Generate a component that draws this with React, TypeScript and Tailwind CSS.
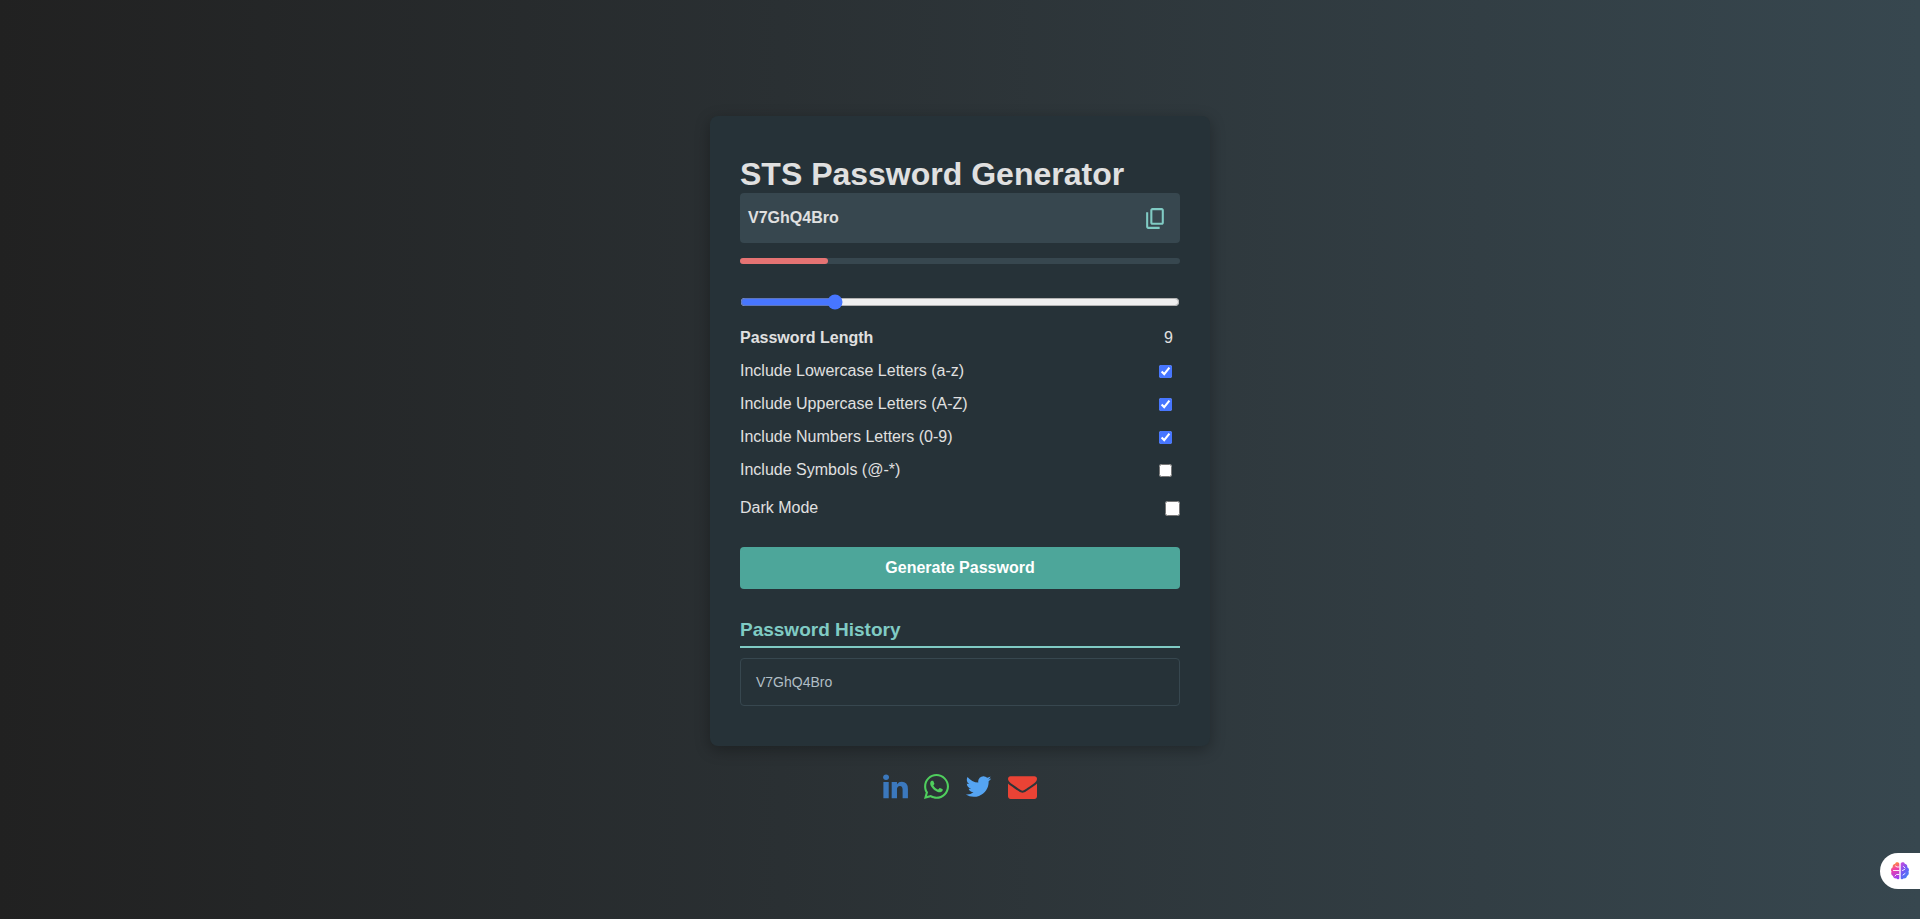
import { useState } from "react";
import { FaWhatsapp } from "react-icons/fa";

type OptionKey = "lower" | "upper" | "numbers" | "symbols";

const OPTIONS: { key: OptionKey; label: string; chars: string }[] = [
  { key: "lower", label: "Include Lowercase Letters (a-z)", chars: "abcdefghijklmnopqrstuvwxyz" },
  { key: "upper", label: "Include Uppercase Letters (A-Z)", chars: "ABCDEFGHIJKLMNOPQRSTUVWXYZ" },
  { key: "numbers", label: "Include Numbers Letters (0-9)", chars: "0123456789" },
  { key: "symbols", label: "Include Symbols (@-*)", chars: "!@#$%^&*()-_=+" },
];

function CopyIcon() {
  return (
    <svg viewBox="0 -960 960 960" className="size-[25px]" fill="currentColor" aria-hidden="true">
      <path d="M360-240q-33 0-56.5-23.5T280-320v-480q0-33 23.5-56.5T360-880h360q33 0 56.5 23.5T800-800v480q0 33-23.5 56.5T720-240H360Zm0-80h360v-480H360v480ZM200-80q-33 0-56.5-23.5T120-160v-560h80v560h440v80H200Z" />
    </svg>
  );
}

function LinkedInIcon() {
  return (
    <svg viewBox="128 0 1536 1792" className="h-[29px] w-[25px] text-[#3b78bd]" fill="currentColor" aria-hidden="true">
      <path d="M477 625v991h-330v-991h330zm21-306q1 73-50.5 122t-135.5 49h-2q-82 0-132-49t-50-122q0-74 51.5-122.5t134.500-48.500 133 48.500 51 122.500zm1166 729v568h-329v-530q0-105-40.500-164.500t-126.500-59.500q-63 0-105.500 34.500t-63.500 85.500q-11 30-11 81v553h-329q2-399 2-647t-1-296l-1-48h329v144h-2q20-32 41-56t56.500-52 87-43.500 114.500-15.500q171 0 275 113.500t104 332.500z" />
    </svg>
  );
}

function TwitterIcon() {
  return (
    <svg viewBox="64 0 1664 1792" className="h-[29px] w-[27px] text-[#55a4f2]" fill="currentColor" aria-hidden="true">
      <path d="M1684 408q-67 98-162 167 1 14 1 42 0 130-38 259.500t-115.500 248.500-184.500 210.500-258 146-323 54.500q-271 0-496-145 35 4 78 4 225 0 401-138-105-2-188-64.500t-114-159.500q33 5 61 5 43 0 85-11-112-23-185.500-111.500t-73.500-205.500v-4q68 38 146 41-66-44-105-115t-39-154q0-88 44-163 121 149 294.500 238.500t371.500 99.500q-8-38-8-74 0-134 94.500-228.500t228.500-94.500q140 0 236 102 109-21 205-78-37 115-142 178 93-10 186-50z" />
    </svg>
  );
}

function EnvelopeIcon() {
  return (
    <svg viewBox="0 0 1792 1792" className="size-[29px] text-[#ea4335]" fill="currentColor" aria-hidden="true">
      <path d="M1792 710v794q0 66-47 113t-113 47h-1472q-66 0-113-47t-47-113v-794q44 49 101 87 362 246 497 345 57 42 92.500 65.500t94.500 48 110 24.500h2q51 0 110-24.500t94.500-48 92.500-65.500q170-123 498-345 57-39 100-87zm0-294q0 79-49 151t-122 123q-376 261-468 325-10 7-42.500 31t-54 38.800-52 32.500-57.500 27-50 9h-2q-23 0-50-9t-57.500-27-52-32.500-54-38.800-42.500-31q-91-64-262-182.500t-205-142.500q-62-42-117-115.500t-55-136.500q0-78 41.500-130t118.500-52h1472q65 0 112.500 47t47.500 113z" />
    </svg>
  );
}

function BrainIcon() {
  return (
    <svg viewBox="0 0 20 20" className="size-5" aria-hidden="true">
      <defs>
        <linearGradient id="brain-left" x1="0.4" y1="0" x2="0.6" y2="1">
          <stop offset="0.05" stopColor="#ff8a3d" />
          <stop offset="0.4" stopColor="#f03fa8" />
          <stop offset="1" stopColor="#9a3ff5" />
        </linearGradient>
        <linearGradient id="brain-right" x1="0.2" y1="0" x2="0.8" y2="1">
          <stop offset="0" stopColor="#c24be0" />
          <stop offset="0.5" stopColor="#6a5cf5" />
          <stop offset="1" stopColor="#3f8cf5" />
        </linearGradient>
      </defs>
      <path
        fill="url(#brain-left)"
        d="M9.3 2.500C8.300.8 5.800.9 5.200 2.700 3.300 2.900 2.300 4.600 2.800 6.200 1 7 .500 9.200 1.500 10.500.700 12.400 1.400 14.300 3 14.900 3.200 16.800 4.800 17.700 6.200 17.300 7.200 18.800 9 18.600 9.300 17.200Z"
      />
      <path
        fill="url(#brain-right)"
        d="M10.700 2.500C11.700.8 14.200.9 14.800 2.700 16.700 2.900 17.700 4.600 17.200 6.200 19 7 19.500 9.200 18.500 10.500 19.300 12.400 18.600 14.300 17 14.900 16.800 16.800 15.200 17.700 13.800 17.300 12.800 18.800 11 18.600 10.700 17.200Z"
      />
      <path
        fill="none"
        stroke="#fff"
        strokeWidth="0.9"
        strokeLinecap="round"
        d="M9 6H7L5.500 5M9 9.500H3.500M9 13.500H6.500L5 15M13.500 5.500L15 7M12.500 9.500L14.500 8.500M13 14L15 12.500"
      />
    </svg>
  );
}

const SOCIAL = [
  { label: "LinkedIn", href: "https://www.linkedin.com", icon: <LinkedInIcon /> },
  { label: "WhatsApp", href: "https://www.whatsapp.com", icon: <FaWhatsapp className="h-[29px] w-[25px] text-[#4fce5d]" /> },
  { label: "Twitter", href: "https://twitter.com", icon: <TwitterIcon /> },
  { label: "Email", href: "mailto:hello@example.com", icon: <EnvelopeIcon /> },
];

export default function App() {
  const [password, setPassword] = useState("V7GhQ4Bro");
  const [history, setHistory] = useState(["V7GhQ4Bro"]);
  const [length, setLength] = useState(9);
  const [dark, setDark] = useState(false);
  const [enabled, setEnabled] = useState<Record<OptionKey, boolean>>({
    lower: true,
    upper: true,
    numbers: true,
    symbols: false,
  });

  const strength = length < 10 ? 20 : length < 16 ? 60 : 100;

  const generate = () => {
    const pool = OPTIONS.filter((o) => enabled[o.key]).map((o) => o.chars).join("");
    if (!pool) return;
    const next = Array.from({ length }, () => pool[Math.floor(Math.random() * pool.length)]).join("");
    setPassword(next);
    setHistory([next, ...history].slice(0, 5));
  };

  return (
    <div className="flex min-h-screen flex-col items-center justify-center bg-linear-to-r from-[#212121] to-[#37474f] font-['Liberation_Sans',Arial,sans-serif] text-base leading-[18px] text-[#e0e0e0]">
      <main className="w-full max-w-[500px] rounded-lg bg-[#263238] px-[30px] py-10 shadow-[0_4px_15px_rgba(0,0,0,0.3)]">
        <h1 className="text-[32px] leading-[37px] font-bold">STS Password Generator</h1>

        <div className="flex h-[50px] items-center justify-between rounded bg-[#37474f] pr-3 pl-2">
          <output className="font-bold">{password}</output>
          <button
            type="button"
            aria-label="Copy password"
            className="cursor-pointer text-[#80cbc4]"
            onClick={() => navigator.clipboard?.writeText(password)}
          >
            <CopyIcon />
          </button>
        </div>

        <div className="mt-[15px] h-1.5 rounded-sm bg-[#37474f]">
          <div className="h-full rounded-sm bg-[#e57373]" style={{ width: `${strength}%` }} />
        </div>

        <input
          id="length"
          type="range"
          min={1}
          max={40}
          value={length}
          onChange={(e) => setLength(Number(e.target.value))}
          className="mt-[30px] block h-4 w-full accent-[#4776ff]"
        />

        <div className="mt-[19px] flex flex-col gap-[15px]">
          <div className="flex items-center justify-between pr-[7px]">
            <label htmlFor="length" className="font-bold">
              Password Length
            </label>
            <span>{length}</span>
          </div>
          {OPTIONS.map((o) => (
            <div key={o.key} className="flex items-center justify-between pr-2">
              <label htmlFor={o.key}>{o.label}</label>
              <input
                id={o.key}
                type="checkbox"
                checked={enabled[o.key]}
                onChange={(e) => setEnabled({ ...enabled, [o.key]: e.target.checked })}
                className="size-[13px] accent-[#4776ff]"
              />
            </div>
          ))}
        </div>

        <div className="mt-5 flex items-center justify-between">
          <label htmlFor="dark">Dark Mode</label>
          <input
            id="dark"
            type="checkbox"
            checked={dark}
            onChange={(e) => setDark(e.target.checked)}
            className="size-[15px] accent-[#4776ff]"
          />
        </div>

        <button
          type="button"
          onClick={generate}
          className="mt-[30px] block w-full cursor-pointer rounded bg-[#4da69a] py-3 font-bold text-white"
        >
          Generate Password
        </button>

        <h2 className="mt-[30px] border-b-2 border-[#80cbc4] pb-1.5 text-[19px] leading-[21px] font-bold text-[#80cbc4]">
          Password History
        </h2>
        <ul className="mt-2.5 flex flex-col gap-2.5">
          {history.map((item, i) => (
            <li key={i} className="rounded border border-[#37474f] px-[15px] py-[15px] text-sm leading-4 text-[#b0bec5]">
              {item}
            </li>
          ))}
        </ul>
      </main>

      <nav aria-label="Contact" className="mt-6 flex h-[33px] items-center gap-4">
        {SOCIAL.map((s) => (
          <a key={s.label} href={s.href} aria-label={s.label}>
            {s.icon}
          </a>
        ))}
      </nav>

      <button
        type="button"
        aria-label="Open assistant"
        className="fixed right-0 bottom-[30px] flex h-9 w-10 cursor-pointer items-center rounded-l-full bg-white pl-2.5"
      >
        <BrainIcon />
      </button>
    </div>
  );
}
